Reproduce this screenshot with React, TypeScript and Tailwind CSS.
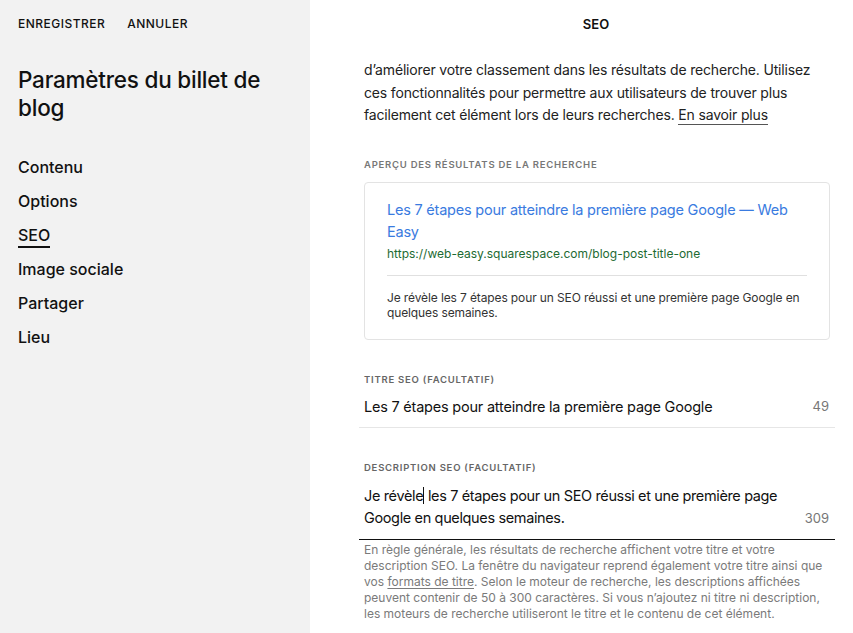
import React from "react";

const font = { fontFamily: "Inter, 'Liberation Sans', Arial, sans-serif" };

const navItems = ["Contenu", "Options", "SEO", "Image sociale", "Partager", "Lieu"];

export default function App() {
  return (
    <div className="flex w-[853px] h-[633px] overflow-hidden bg-white text-[#111]" style={font}>
      {/* Sidebar */}
      <aside className="w-[310px] shrink-0 bg-[#f2f2f2] px-[18px]">
        <div className="flex gap-[22px] pt-[16px] text-[12px] font-medium tracking-[0.04em] leading-[16px]">
          <span>ENREGISTRER</span>
          <span>ANNULER</span>
        </div>
        <h1 className="mt-[34px] text-[22.5px] font-medium leading-[28px] tracking-[-0.01em] pr-[20px]">
          Paramètres du billet de blog
        </h1>
        <nav className="mt-[34px] flex flex-col gap-[12px]">
          {navItems.map((item) => (
            <div key={item} className="h-[22px] text-[16px] font-medium leading-[22px]">
              <span className={item === "SEO" ? "inline-block border-b-2 border-[#111] leading-[20px] pb-[1px]" : ""}>
                {item}
              </span>
            </div>
          ))}
        </nav>
      </aside>

      {/* Main panel */}
      <main className="flex-1 flex flex-col">
        <div className="pt-[16px] text-center pl-[29px] text-[13px] leading-[16px] font-semibold">SEO</div>
        <div className="pl-[49px] pr-[18px]">
          <div className="pl-[5px]">
            <p className="mt-[27px] mr-[18px] text-[14px] leading-[22.5px] tracking-[-0.012em] text-[#222]">
              d’améliorer votre classement dans les résultats de recherche. Utilisez ces fonctionnalités pour permettre aux utilisateurs de trouver plus facilement cet élément lors de leurs recherches.{" "}
              <span className="border-b border-[#555] pb-[1px]">En savoir plus</span>
            </p>

            <div className="mt-[32px] text-[9.5px] font-semibold tracking-[0.08em] text-[#777] leading-[12px]">
              APERÇU DES RÉSULTATS DE LA RECHERCHE
            </div>
            <div className="mt-[11px] mr-[5px] rounded-[4px] border border-[#e3e3e3] px-[22px] pt-[16px] pb-[18px]">
              <div className="text-[14.5px] leading-[22px] tracking-[-0.015em] text-[#3a7be0]">
                Les 7 étapes pour atteindre la première page Google — Web Easy
              </div>
              <div className="mt-[2px] text-[12px] leading-[18px] text-[#1d6a32]">
                https://web-easy.squarespace.com/blog-post-title-one
              </div>
              <div className="mt-[12px] border-t border-[#e0e0e0]" />
              <div className="mt-[14px] text-[12px] leading-[15.5px] tracking-[-0.01em] text-[#333]">
                Je révèle les 7 étapes pour un SEO réussi et une première page Google en quelques semaines.
              </div>
            </div>

            <div className="mt-[34px] text-[9.5px] font-semibold tracking-[0.08em] text-[#666] leading-[12px]">
              TITRE SEO (FACULTATIF)
            </div>
          </div>
          <div className="mt-[10px] flex items-center justify-between border-b border-[#e6e6e6] pl-[5px] pr-[6px] pb-[9px]">
            <span className="text-[14.5px] leading-[22px] tracking-[-0.015em] text-[#111]">
              Les 7 étapes pour atteindre la première page Google
            </span>
            <span className="text-[13px] text-[#777]">49</span>
          </div>

          <div className="pl-[5px] mt-[34px] text-[9.5px] font-semibold tracking-[0.08em] text-[#666] leading-[12px]">
            DESCRIPTION SEO (FACULTATIF)
          </div>
          <div className="mt-[11px] flex items-end justify-between border-b border-[#111] pl-[5px] pr-[6px] pb-[9px]">
            <span className="text-[14.5px] leading-[22.5px] tracking-[-0.025em] text-[#111] pr-[16px]">
              <span className="border-r border-[#111]">Je révèle</span>
              {" "}les 7 étapes pour un SEO réussi et une première page Google en quelques semaines.
            </span>
            <span className="text-[13px] text-[#777] leading-[22.5px]">309</span>
          </div>
          <p className="pl-[5px] mt-[2px] text-[12px] leading-[16px] text-[#7a7a7a] pr-[10px]">
            En règle générale, les résultats de recherche affichent votre titre et votre description SEO. La fenêtre du navigateur reprend également votre titre ainsi que vos{" "}
            <span className="underline underline-offset-2">formats de titre</span>. Selon le moteur de recherche, les descriptions affichées peuvent contenir de 50 à 300 caractères. Si vous n’ajoutez ni titre ni description, les moteurs de recherche utiliseront le titre et le contenu de cet élément.
          </p>
        </div>
      </main>
    </div>
  );
}
